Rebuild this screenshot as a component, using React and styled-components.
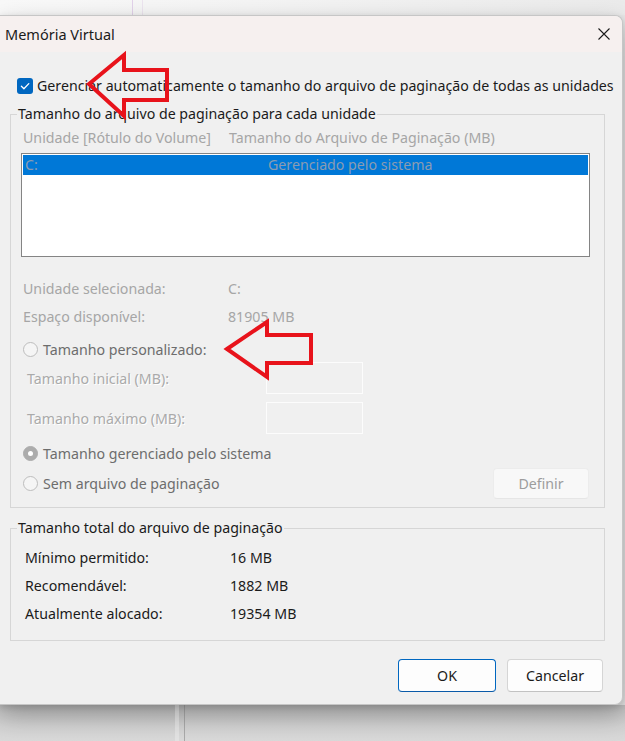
import React from "react";
import styled, { createGlobalStyle } from "styled-components";

const GlobalStyle = createGlobalStyle`
  html, body { margin: 0; padding: 0; }
  body { font-family: "Segoe UI", "Noto Sans", sans-serif; background: #e4e4e4; }
  * { box-sizing: border-box; }
`;

const Screen = styled.div`
  position: relative;
  width: 625px;
  height: 741px;
  overflow: hidden;
  background: #e8e8e8;
  display: flex;
  flex-direction: column;
  font-size: 14.2px;
  color: #1b1b1b;
`;

const TopStrip = styled.div`
  height: 15px;
  flex: none;
  background:
    linear-gradient(to right, transparent 132px, #e2d2ea 132px, #e2d2ea 133px, transparent 133px, transparent 142px, #ece4ef 142px, #ece4ef 143px, transparent 143px),
    linear-gradient(to right, #f9f9f9, #f4f4f4 40%, #ebebeb);
`;

const BottomStrip = styled.div`
  flex: 1;
  background:
    linear-gradient(to right, transparent 175px, #e2e2e2 175px, #e2e2e2 179px, transparent 179px, transparent 184px, #a9a9a9 184px, #a9a9a9 185px, transparent 185px),
    linear-gradient(to bottom, #c2c2c2, #d3d3d3 60%, #d9d9d9);
`;

const Dialog = styled.section`
  position: relative;
  z-index: 1;
  flex: none;
  width: 623px;
  height: 690px;
  display: flex;
  flex-direction: column;
  background: #f0f0f0;
  border: 1px solid #c6c6c6;
  border-left: none;
  border-radius: 0 8px 8px 0;
  box-shadow: 0 10px 26px rgba(0, 0, 0, 0.26), 0 2px 6px rgba(0, 0, 0, 0.12);
  overflow: hidden;
`;

const TitleBar = styled.header`
  height: 36px;
  flex: none;
  display: flex;
  align-items: center;
  justify-content: space-between;
  padding: 0 11px 1px 5px;
  background: #f6f0ef;
`;

const Title = styled.h1`
  margin: 0;
  font-size: 14.5px;
  font-weight: 400;
  color: #1b1b1b;
`;

const CloseButton = styled.button`
  width: 14px;
  height: 14px;
  padding: 0;
  border: none;
  background: transparent;
  display: flex;
  align-items: center;
  justify-content: center;
`;

const Body = styled.div`
  flex: 1;
  display: flex;
  flex-direction: column;
`;

const CheckRow = styled.label`
  margin-top: 25px;
  height: 17px;
  padding-left: 17px;
  display: flex;
  align-items: center;
  gap: 4px;
  line-height: 17px;
  white-space: nowrap;
`;

const CheckBox = styled.span`
  width: 16px;
  height: 16px;
  flex: none;
  border-radius: 3px;
  background: #0067c0;
  display: flex;
  align-items: center;
  justify-content: center;
`;

const Group = styled.fieldset`
  margin: ${(p) => p.$top}px 0 0 10px;
  width: 595px;
  min-width: 0;
  padding: 0 0 ${(p) => p.$bottom}px;
  border: 1px solid #d6d6d6;
`;

const Legend = styled.legend`
  margin-left: 6px;
  padding: 0 1px;
  line-height: 20px;
  color: #1b1b1b;
`;

const HeaderRow = styled.div`
  margin-top: 4px;
  height: 20px;
  line-height: 20px;
  padding-left: 12px;
  display: grid;
  grid-template-columns: 206px 1fr;
  color: #a6a6a6;
  white-space: nowrap;
`;

const ListBox = styled.div`
  margin: 5px 0 0 10px;
  width: 569px;
  height: 104px;
  padding: 1px;
  background: #ffffff;
  border: 1px solid #848484;
`;

const ListItem = styled.div`
  height: 20px;
  line-height: 20px;
  padding-left: 2px;
  display: grid;
  grid-template-columns: 243px 1fr;
  background: ${(p) => (p.$selected ? "#0078d7" : "transparent")};
  color: #8a9cb2;
  white-space: nowrap;
`;

const InfoRow = styled.div`
  margin-top: ${(p) => p.$top}px;
  height: 20px;
  line-height: 20px;
  padding-left: ${(p) => p.$indent}px;
  display: grid;
  grid-template-columns: 205px 1fr;
  color: ${(p) => (p.$enabled ? "#1b1b1b" : "#a6a6a6")};
  white-space: nowrap;
`;

const RadioRow = styled.label`
  margin-top: ${(p) => p.$top || 0}px;
  height: 20px;
  padding-left: 12px;
  display: flex;
  align-items: center;
  gap: 5px;
  color: #6d6d6d;
  white-space: nowrap;
`;

const RadioCircle = styled.span`
  width: 15px;
  height: 15px;
  flex: none;
  border-radius: 50%;
  border: 1px solid ${(p) => (p.$checked ? "#acacac" : "#bdbdbd")};
  background: ${(p) => (p.$checked ? "#acacac" : "#f5f5f5")};
  display: flex;
  align-items: center;
  justify-content: center;

  &::after {
    content: "";
    width: 5px;
    height: 5px;
    border-radius: 50%;
    background: #ffffff;
    display: ${(p) => (p.$checked ? "block" : "none")};
  }
`;

const SizeRow = styled.div`
  margin-top: ${(p) => p.$top}px;
  height: 32px;
  padding-left: 16px;
  display: grid;
  grid-template-columns: 239px 97px;
  align-items: center;
`;

const EmbossedLabel = styled.span`
  color: #aaaaaa;
  text-shadow: 1px 1px 0 #ffffff;
  white-space: nowrap;
`;

const SizeInput = styled.div`
  width: 97px;
  height: 32px;
  border: 1px solid #fcfcfc;
  background: #f0f0f0;
`;

const LastRow = styled.div`
  margin-top: 5px;
  height: 31px;
  padding: 0 15px 0 0;
  display: flex;
  align-items: center;
  justify-content: space-between;
`;

const Button = styled.button`
  height: ${(p) => p.$h || 33}px;
  width: ${(p) => p.$w}px;
  padding: 0;
  font-family: inherit;
  font-size: 14.2px;
  border-radius: 4px;
  background: ${(p) => (p.$disabled ? "#f8f8f8" : "#fdfdfd")};
  color: ${(p) => (p.$disabled ? "#9d9d9d" : "#1b1b1b")};
  border: 1px solid ${(p) => (p.$primary ? "#0067c0" : p.$disabled ? "#ececec" : "#d5d5d5")};
  border-bottom-color: ${(p) => (p.$primary ? "#0a5aa8" : p.$disabled ? "#e6e6e6" : "#c2c2c2")};
`;

const ButtonRow = styled.div`
  margin-top: 18px;
  padding-right: 19px;
  display: flex;
  justify-content: flex-end;
  gap: 11px;
`;

const Annotation = styled.svg`
  position: absolute;
  left: 0;
  top: 0;
  z-index: 2;
  pointer-events: none;
`;

export default function App() {
  return (
    <>
      <GlobalStyle />
      <Screen>
        <TopStrip />
        <Dialog>
          <TitleBar>
            <Title>Memória Virtual</Title>
            <CloseButton aria-label="Fechar">
              <svg width="12" height="12" viewBox="0 0 12 12">
                <path d="M0.5 0.5 L11.5 11.5 M11.5 0.5 L0.5 11.5" stroke="#1b1b1b" strokeWidth="1.1" fill="none" />
              </svg>
            </CloseButton>
          </TitleBar>
          <Body>
            <CheckRow>
              <CheckBox>
                <svg width="12" height="12" viewBox="0 0 12 12">
                  <path d="M2.4 6.3 L4.9 8.7 L9.8 3.6" stroke="#fff" strokeWidth="1.3" fill="none" strokeLinecap="round" strokeLinejoin="round" />
                </svg>
              </CheckBox>
              Gerenciar automaticamente o tamanho do arquivo de paginação de todas as unidades
            </CheckRow>

            <Group $top={10} $bottom={8}>
              <Legend>Tamanho do arquivo de paginação para cada unidade</Legend>
              <HeaderRow>
                <span>Unidade [Rótulo do Volume]</span>
                <span>Tamanho do Arquivo de Paginação (MB)</span>
              </HeaderRow>
              <ListBox>
                <ListItem $selected>
                  <span>C:</span>
                  <span>Gerenciado pelo sistema</span>
                </ListItem>
              </ListBox>
              <InfoRow $top={22} $indent={12}>
                <span>Unidade selecionada:</span>
                <span>C:</span>
              </InfoRow>
              <InfoRow $top={8} $indent={12}>
                <span>Espaço disponível:</span>
                <span>81905 MB</span>
              </InfoRow>
              <RadioRow $top={12}>
                <RadioCircle />
                Tamanho personalizado:
              </RadioRow>
              <SizeRow $top={3}>
                <EmbossedLabel>Tamanho inicial (MB):</EmbossedLabel>
                <SizeInput />
              </SizeRow>
              <SizeRow $top={8}>
                <EmbossedLabel>Tamanho máximo (MB):</EmbossedLabel>
                <SizeInput />
              </SizeRow>
              <RadioRow $top={9}>
                <RadioCircle $checked />
                Tamanho gerenciado pelo sistema
              </RadioRow>
              <LastRow>
                <RadioRow>
                  <RadioCircle />
                  Sem arquivo de paginação
                </RadioRow>
                <Button $w={96} $h={31} $disabled>Definir</Button>
              </LastRow>
            </Group>

            <Group $top={10} $bottom={16}>
              <Legend>Tamanho total do arquivo de paginação</Legend>
              <InfoRow $top={10} $indent={14} $enabled>
                <span>Mínimo permitido:</span>
                <span>16 MB</span>
              </InfoRow>
              <InfoRow $top={8} $indent={14} $enabled>
                <span>Recomendável:</span>
                <span>1882 MB</span>
              </InfoRow>
              <InfoRow $top={8} $indent={14} $enabled>
                <span>Atualmente alocado:</span>
                <span>19354 MB</span>
              </InfoRow>
            </Group>

            <ButtonRow>
              <Button $w={98} $primary>OK</Button>
              <Button $w={96}>Cancelar</Button>
            </ButtonRow>
          </Body>
        </Dialog>
        <BottomStrip />
        <Annotation width="625" height="741" viewBox="0 0 625 741">
          <polygon
            points="89,84 124,55 124,70 167,70 167,100 124,100 124,116"
            fill="none"
            stroke="#e8131b"
            strokeWidth="4"
            strokeLinejoin="miter"
          />
          <polygon
            points="227,349 267,322 267,335 311,335 311,363 267,363 267,377"
            fill="none"
            stroke="#e8131b"
            strokeWidth="4"
            strokeLinejoin="miter"
          />
        </Annotation>
      </Screen>
    </>
  );
}
